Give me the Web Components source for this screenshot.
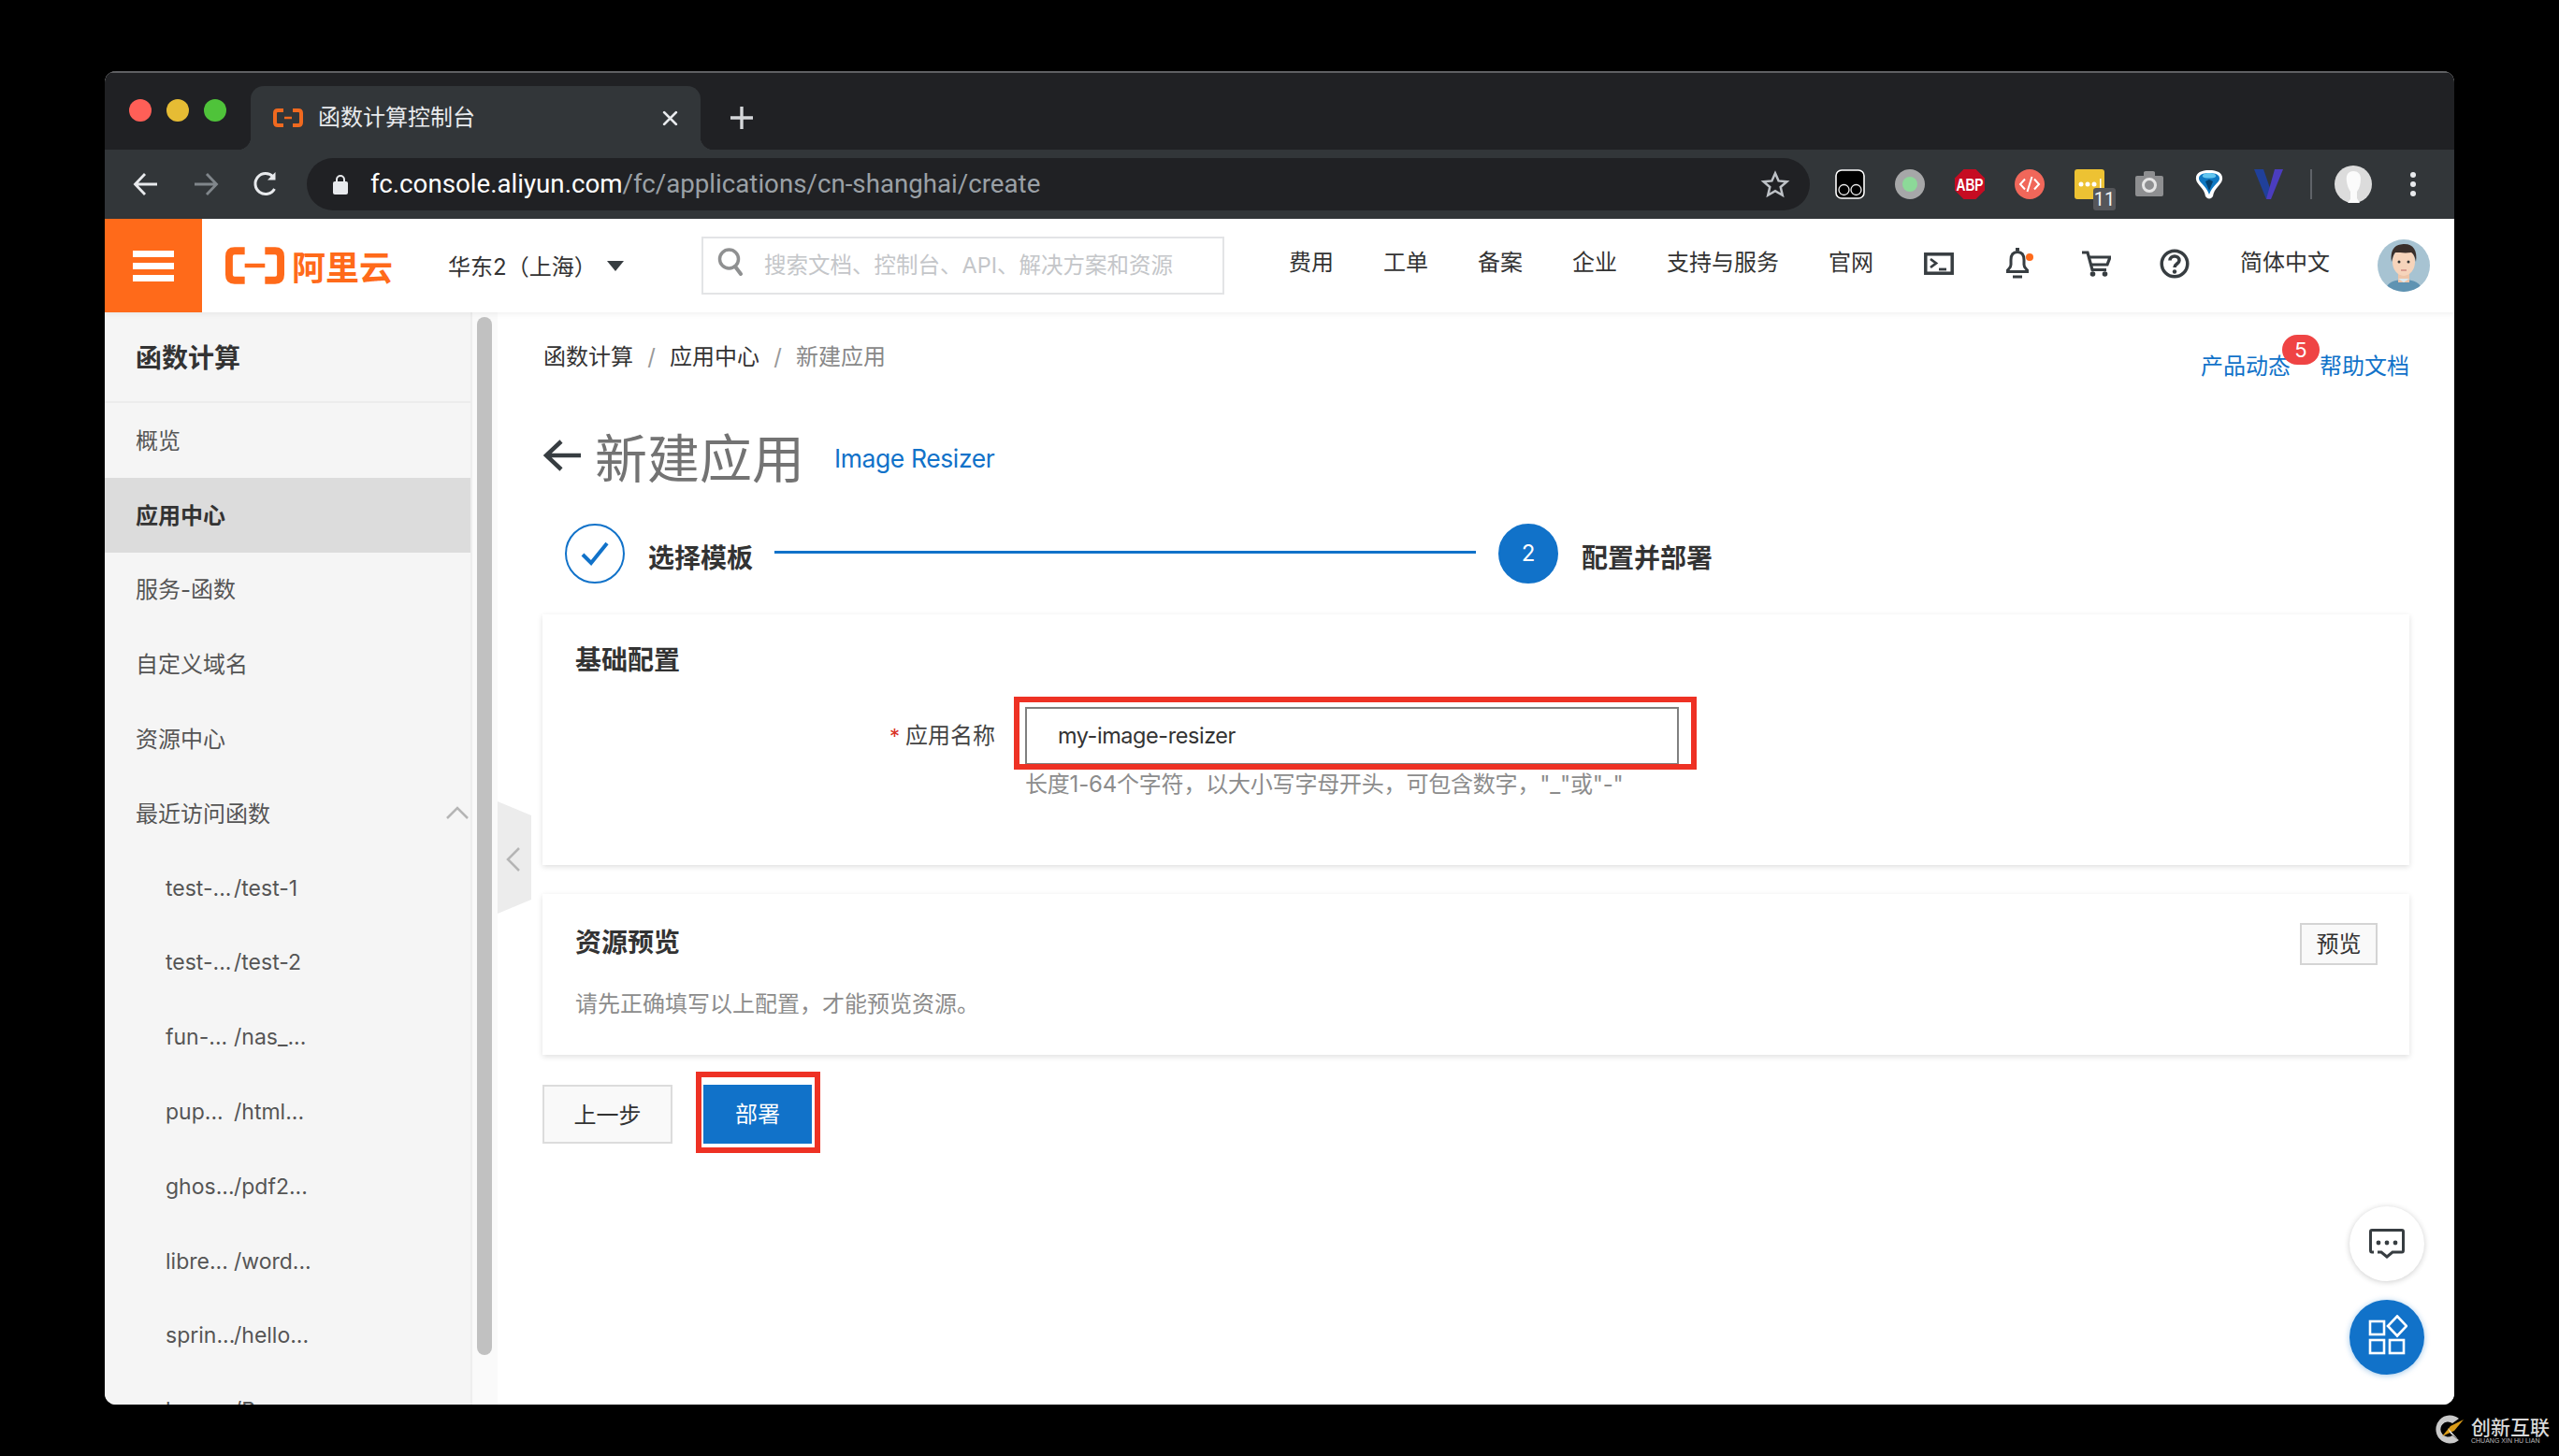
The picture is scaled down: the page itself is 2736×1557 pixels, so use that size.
<!DOCTYPE html>
<html lang="zh-CN">
<head>
<meta charset="utf-8">
<title>函数计算控制台</title>
<style>
html,body{margin:0;padding:0;background:#000;width:2736px;height:1557px;overflow:hidden}
body{font-family:Inter,"Noto Sans CJK SC",sans-serif;font-size:24px;position:relative}
</style>
</head>
<body>
<browser-window>
  <chrome-tabstrip slot="tabs">函数计算控制台</chrome-tabstrip>
  <chrome-toolbar slot="toolbar"></chrome-toolbar>
  <console-header slot="header"></console-header>
  <side-nav slot="side">
    <nav-item>概览</nav-item>
    <nav-item active>应用中心</nav-item>
    <nav-item>服务-函数</nav-item>
    <nav-item>自定义域名</nav-item>
    <nav-item>资源中心</nav-item>
    <nav-item chevron>最近访问函数</nav-item>
    <sub-item><span slot="a">test-...</span><span slot="b">/test-1</span></sub-item>
    <sub-item><span slot="a">test-...</span><span slot="b">/test-2</span></sub-item>
    <sub-item><span slot="a">fun-...</span><span slot="b">/nas_...</span></sub-item>
    <sub-item><span slot="a">pup...</span><span slot="b">/html...</span></sub-item>
    <sub-item><span slot="a">ghos...</span><span slot="b">/pdf2...</span></sub-item>
    <sub-item><span slot="a">libre...</span><span slot="b">/word...</span></sub-item>
    <sub-item><span slot="a">sprin...</span><span slot="b">/hello...</span></sub-item>
    <sub-item><span slot="a">hu-ya...</span><span slot="b">/Bas...</span></sub-item>
  </side-nav>
  <side-scroll slot="scroll"></side-scroll>
  <app-page slot="main">
    <page-top></page-top>
    <page-title>新建应用<span slot="sub">Image Resizer</span></page-title>
    <step-bar></step-bar>
    <form-card></form-card>
    <preview-card></preview-card>
    <action-bar></action-bar>
    <collapse-handle></collapse-handle>
    <fab-stack></fab-stack>
  </app-page>
</browser-window>
<water-mark></water-mark>
<script>
function def(name, html, init){
  customElements.define(name, class extends HTMLElement{
    constructor(){super();this.attachShadow({mode:'open'}).innerHTML=html;}
    connectedCallback(){ if(init) init.call(this,this.shadowRoot); }
  });
}
const BLUE='#1172c9';

def('browser-window',`<style>
:host{display:flex;flex-direction:column;position:absolute;left:112px;top:76px;width:2512px;height:1426px;border-radius:12px;overflow:hidden;background:#fff}
.body{flex:1;display:flex;min-height:0}
</style>
<slot name="tabs"></slot><slot name="toolbar"></slot><slot name="header"></slot>
<div class="body"><slot name="side"></slot><slot name="scroll"></slot><slot name="main"></slot></div>`);

def('chrome-tabstrip',`<style>
:host{display:flex;align-items:flex-end;height:84px;box-sizing:border-box;background:#202124;border-top:2px solid #5f6063;padding-left:26px;flex:none}
.lights{display:flex;gap:16px;align-self:flex-start;margin-top:28px}
.lights i{display:block;width:24px;height:24px;border-radius:50%}
.tab{position:relative;box-sizing:border-box;margin-left:26px;width:481px;height:68px;background:#323639;border-radius:14px 14px 0 0;display:flex;align-items:center;padding:0 24px 0 24px;color:#e8eaed;font:24px/34px Inter,"Noto Sans CJK SC",sans-serif}
.tab::before,.tab::after{content:"";position:absolute;bottom:0;width:14px;height:14px}
.tab::before{left:-14px;background:radial-gradient(circle at 0 0,transparent 14px,#323639 14.5px)}
.tab::after{right:-14px;background:radial-gradient(circle at 100% 0,transparent 14px,#323639 14.5px)}
.txt{margin-left:16px;flex:1}
.plus{margin:0 0 22px 32px;display:block}
</style>
<div class="lights"><i style="background:#ff5f57"></i><i style="background:#e6bc34"></i><i style="background:#4fc33a"></i></div>
<div class="tab">
  <svg width="32" height="20" viewBox="0 0 32 20" fill="none" stroke="#f0691f" stroke-width="4"><path d="M11 2H5Q2 2 2 5V15Q2 18 5 18H11"/><path d="M21 2H27Q30 2 30 5V15Q30 18 27 18H21"/><path d="M12 10H20" stroke-width="2.5"/></svg>
  <span class="txt"><slot></slot></span>
  <svg width="17" height="17" viewBox="0 0 16 16" stroke="#e8eaed" stroke-width="2.6" stroke-linecap="round"><path d="M2 2L14 14M14 2L2 14"/></svg>
</div>
<svg class="plus" width="24" height="24" viewBox="0 0 24 24" stroke="#d5d7da" stroke-width="3.4"><path d="M12 0V24M0 12H24"/></svg>`);

def('chrome-toolbar',`<style>
:host{display:flex;align-items:center;height:74px;background:#323639;padding-left:12px;flex:none;box-sizing:border-box}
.b{width:64px;height:40px;display:flex;align-items:center;justify-content:center;flex:none;position:relative}
.url{margin-left:12px;width:1607px;height:56px;background:#202124;border-radius:28px;display:flex;align-items:center;box-sizing:border-box;padding-left:28px;flex:none;font:27.7px/56px Roboto,sans-serif;color:#fff;margin-top:-1px}
.url span.p{color:#9aa0a6}
.txt{margin-left:24px;white-space:nowrap;flex:1}
.star{margin-right:21px}
.exts{margin-left:11px;display:flex}
.badge{position:absolute;left:36px;top:24px;width:24px;height:24px;background:#55565a;border-radius:3px;color:#f2f2f2;font:20px/24px Roboto,sans-serif;text-align:center}
.sep{width:2px;height:32px;background:#5f6368;margin-left:12px;flex:none}
.pf{margin-left:24px;flex:none}
.dots{margin-left:24px;width:40px;display:flex;flex-direction:column;align-items:center;gap:4px;flex:none}
.dots i{display:block;width:6px;height:6px;border-radius:50%;background:#e8eaed}
</style>
<div class="b"><svg width="28" height="28" viewBox="0 0 28 28" fill="none" stroke="#e8eaed" stroke-width="2.8"><path d="M26 14H3M13 3L2.500 14L13 25"/></svg></div>
<div class="b"><svg width="28" height="28" viewBox="0 0 28 28" fill="none" stroke="#80868b" stroke-width="2.8"><path d="M2 14H25M15 3L25.500 14L15 25"/></svg></div>
<div class="b"><svg width="30" height="30" viewBox="0 0 30 30" fill="none" stroke="#e8eaed" stroke-width="3"><path d="M24.500 20A11 11 0 1 1 23 7"/><path d="M25.500 2V10.500H17Z" fill="#e8eaed" stroke="none"/></svg></div>
<div class="url">
  <svg width="16" height="22" viewBox="0 0 16 22"><path d="M4 9V6a4 4 0 0 1 8 0V9" fill="none" stroke="#e8eaed" stroke-width="2"/><rect x="0" y="8" width="16" height="14" rx="2" fill="#e8eaed"/></svg>
  <span class="txt">fc.console.aliyun.com<span class="p">/fc/applications/cn-shanghai/create</span></span>
  <svg class="star" width="32" height="32" viewBox="0 0 24 24" fill="none" stroke="#bdc1c6" stroke-width="1.9" stroke-linejoin="miter"><path d="M12 3.200l2.700 6.100 6.600.6-5 4.400 1.500 6.500L12 17.400 6.200 20.800l1.500-6.500-5-4.400 6.600-.6z"/></svg>
</div>
<div class="exts">
  <div class="b"><svg width="32" height="32" viewBox="0 0 32 32"><rect x="1" y="1" width="30" height="30" rx="6" fill="#000" stroke="#fff" stroke-width="1.6"/><circle cx="9.500" cy="22" r="5.500" fill="none" stroke="#eee" stroke-width="1.300"/><circle cx="22.500" cy="22" r="5.500" fill="none" stroke="#eee" stroke-width="1.300"/></svg></div>
  <div class="b"><svg width="32" height="32" viewBox="0 0 32 32"><circle cx="16" cy="16" r="16" fill="#a6a7a8"/><circle cx="16" cy="16" r="8" fill="#8cd998"/></svg></div>
  <div class="b"><svg width="34" height="34" viewBox="0 0 34 34"><path d="M10.500 1H23.500L33 10.500V23.500L23.500 33H10.500L1 23.500V10.500Z" fill="#c60c22"/><text x="17" y="23.500" text-anchor="middle" font-family="Liberation Sans" font-weight="700" font-size="17.500" fill="#fff" textLength="29" lengthAdjust="spacingAndGlyphs">ABP</text></svg></div>
  <div class="b"><svg width="32" height="32" viewBox="0 0 32 32"><circle cx="16" cy="16" r="16" fill="#f1675a"/><path d="M11 10.500L6 16L11 21.500M21 10.500L26 16L21 21.500M18.500 8L13.500 24" fill="none" stroke="#fff" stroke-width="2"/></svg></div>
  <div class="b"><svg width="32" height="32" viewBox="0 0 32 32"><rect width="32" height="32" rx="3" fill="#edc233"/><g fill="#fff"><circle cx="7" cy="16" r="2.500"/><circle cx="14" cy="16" r="2.500"/><circle cx="21" cy="16" r="2.500"/><rect x="27" y="10" width="1.500" height="12"/></g></svg><span class="badge">11</span></div>
  <div class="b"><svg width="30" height="30" viewBox="0 0 30 30"><path d="M2 6H9V2.500Q9 1 11 1H19Q21 1 21 2.500V6H28Q30 6 30 8V26Q30 28 28 28H2Q0 28 0 26V8Q0 6 2 6Z" fill="#8e8f91"/><circle cx="15" cy="16" r="6.500" fill="none" stroke="#e5e5e5" stroke-width="3"/></svg></div>
  <div class="b"><svg width="32" height="32" viewBox="0 0 32 32"><path d="M16 1C7 1 1 4 2 11C3 17 11 20 12 29Q16 34 20 29C21 20 29 17 30 11C31 4 25 1 16 1Z" fill="#fff"/><path d="M16 4C9 4 4.500 6 5 10.500C6 15 13 18 16 27C19 18 26 15 27 10.500C27.500 6 23 4 16 4Z" fill="#0f78c2"/><path d="M16 4C11 4 8 6 9 8C11 10 21 10 23 8C24 6 21 4 16 4Z" fill="#62c6f0"/><path d="M16 11L12 13L16 23L20 13Z" fill="#06416f"/></svg></div>
  <div class="b"><svg width="32" height="34" viewBox="0 0 32 34"><path d="M0 1H10L18 24L13 33Z" fill="#20409a"/><path d="M22 1H31L18 33H13Z" fill="#4b3dbf"/></svg></div>
</div>
<div class="sep"></div>
<svg class="pf" width="40" height="40" viewBox="0 0 40 40"><circle cx="20" cy="20" r="20" fill="#dcdcdc"/><path d="M20 6C14 6 12 11 13 17C13.500 21 15 25 17 28V36L14 40H27L24 35V28C27 24 28 19 28 14C28 9 25 6 20 6Z" fill="#fbfbfb"/></svg>
<div class="dots"><i></i><i></i><i></i></div>`);

def('console-header',`<style>
:host{display:flex;align-items:center;height:100px;background:#fff;flex:none;position:relative;z-index:2;box-shadow:0 2px 6px rgba(0,0,0,.06);color:#333;font:24px/34px Inter,"Noto Sans CJK SC",sans-serif}
.menu{width:104px;height:100px;background:#ff6a1a;display:flex;flex-direction:column;align-items:center;justify-content:center;gap:6px;flex:none}
.menu i{display:block;width:44px;height:7px;background:#fff}
.logo{margin-left:25px;display:flex;align-items:center;flex:none;width:179px}
.logotxt{margin-left:8px;color:#ff6a1a;font:700 36px/40px "Noto Sans CJK SC",sans-serif;white-space:nowrap}
.region{margin-left:59px;flex:none;width:168px;white-space:nowrap;padding-top:3px}
.caret{width:0;height:0;border:9px solid transparent;border-top:11px solid #373d41;border-bottom:0;flex:none;margin-left:2px}
.search{margin-left:83px;width:559px;height:62px;box-sizing:border-box;border:2px solid #e3e4e6;display:flex;align-items:center;padding-left:14px;flex:none;color:#c4c6c9;white-space:nowrap;overflow:hidden;margin-top:-1px}
.search svg{margin-top:-8px}
.search span{margin-left:21px;font-size:23.500px}
.nav{margin-left:69px;display:flex;gap:53px;padding-bottom:6px;flex:none;white-space:nowrap}
.icons{display:flex;margin-left:28px;flex:none}
.icons div{width:84px;display:flex;align-items:center;justify-content:center;margin-top:-4px}
.lang{margin-left:28px;padding-bottom:6px;white-space:nowrap;flex:none}
.ava{margin-left:51px;flex:none}
</style>
<div class="menu"><i></i><i></i><i></i></div>
<div class="logo"><svg width="64" height="40" viewBox="0 0 64 40" fill="none" stroke="#ff6a1a" stroke-width="8"><path d="M21 4H10Q4 4 4 10V30Q4 36 10 36H21" stroke-linejoin="round"/><path d="M43 4H54Q60 4 60 10V30Q60 36 54 36H43"/><path d="M21 20H43" stroke-width="4.500"/></svg><span class="logotxt">阿里云</span></div>
<div class="region">华东2（上海）</div><span class="caret"></span>
<div class="search"><svg width="30" height="30" viewBox="0 0 30 30" fill="none" stroke="#8f9091" stroke-width="3.500" stroke-linecap="round"><circle cx="13.500" cy="12" r="10"/><path d="M20 20L26 28" stroke-width="4"/></svg><span>搜索文档、控制台、API、解决方案和资源</span></div>
<div class="nav"><span>费用</span><span>工单</span><span>备案</span><span>企业</span><span>支持与服务</span><span>官网</span></div>
<div class="icons">
 <div><svg width="32" height="24" viewBox="0 0 32 24" fill="none" stroke="#373d41" stroke-width="3.500"><rect x="1.800" y="1.800" width="28.400" height="20.400"/><path d="M7 7L13 11.500L7 16" stroke-width="2.800"/><path d="M16 18H24" stroke-width="2.800"/></svg></div>
 <div><svg width="48" height="34" viewBox="0 0 48 34" fill="none" stroke="#373d41" stroke-width="3"><g transform="translate(12 0)"><rect x="10" y="0" width="4" height="3.500" fill="#373d41" stroke="none"/><path d="M12 4.500C6.500 4.500 5 8.500 5 13V18C5 21 3 22 1.500 24V25.500H22.500V24C21 22 19 21 19 18V13C19 8.500 17.500 4.500 12 4.500Z"/><path d="M7 31H17"/><circle cx="25" cy="10" r="4" fill="#ff6a1a" stroke="none"/></g></svg></div>
 <div><svg width="32" height="28" viewBox="0 0 32 28" fill="none" stroke="#373d41" stroke-width="3.200"><path d="M1 2H7L12 20.500H27"/><path d="M8.500 7H31L28 15H11"/><circle cx="12.500" cy="25" r="2.800" fill="#373d41" stroke="none"/><circle cx="25.500" cy="25" r="2.800" fill="#373d41" stroke="none"/></svg></div>
 <div><svg width="32" height="32" viewBox="0 0 32 32" fill="none" stroke="#373d41" stroke-width="3.500"><circle cx="16" cy="16" r="13.800"/><path d="M11 12.500C11 6.500 21 6.500 21 12.500C21 16 16 16 16 20" stroke-width="3.600"/><circle cx="16" cy="24.500" r="2.200" fill="#373d41" stroke="none"/></svg></div>
</div>
<div class="lang">简体中文</div>
<svg class="ava" width="56" height="56" viewBox="0 0 56 56"><defs><clipPath id="c"><circle cx="28" cy="28" r="28"/></clipPath></defs><g clip-path="url(#c)"><rect width="56" height="56" fill="#a7c3d2"/><path d="M8 56C9 46 18 43 28 43C38 43 47 46 48 56Z" fill="#5f93b2"/><rect x="22" y="34" width="12" height="12" fill="#eec5a8"/><path d="M28 46L22 42H34Z" fill="#dbeaf1"/><ellipse cx="28" cy="24" rx="12" ry="15" fill="#f6d4bb"/><path d="M15 24C13 8 21 5 29 5C38 5 43 12 41 24C40 18 38 15 36 14C30 15 23 14 19 14C17 16 16 20 15 24Z" fill="#3a2f2b"/><circle cx="23" cy="24" r="1.500" fill="#333"/><circle cx="33" cy="24" r="1.500" fill="#333"/><path d="M25 33H31" stroke="#b66" stroke-width="1.200"/></g></svg>`);

def('side-nav',`<style>
:host{display:block;width:391px;background:#f5f5f5;overflow:hidden;flex:none;color:#555;font:24px/34px Inter,"Noto Sans CJK SC",sans-serif}
.t{box-sizing:border-box;border-bottom:2px solid #ececec;padding:29px 0 0 33px;font:700 28px/36px "Noto Sans CJK SC",sans-serif;color:#333;height:97px}
</style>
<div class="t">函数计算</div><slot></slot>`);

def('nav-item',`<style>
:host{display:flex;align-items:center;height:79.800px;padding:2px 0 0 33px;box-sizing:border-box;position:relative}
:host([active]){background:#dcdcdc;color:#333;font-weight:700}
svg{position:absolute;left:365px;top:32px}
</style><slot></slot>`,function(r){
  if(this.hasAttribute('chevron')&&!r.querySelector('svg')){
    r.innerHTML+='<svg width="24" height="14" viewBox="0 0 24 14" fill="none" stroke="#b5b5b5" stroke-width="2.500"><path d="M1 13L12 2L23 13"/></svg>';
  }
});

def('sub-item',`<style>
:host{display:grid;grid-template-columns:73px auto;align-items:center;height:79.800px;padding-left:65px;box-sizing:border-box;white-space:nowrap;font-size:23px}
</style><slot name="a"></slot><slot name="b"></slot>`);

def('side-scroll',`<style>
:host{display:block;width:29px;flex:none;background:#fafafa;box-sizing:border-box;border-left:2px solid #eee;padding:5px 0 0 5px}
i{display:block;width:16px;height:1110px;background:#c1c1c1;border-radius:8px}
</style><i></i>`);

def('app-page',`<style>
:host{display:block;flex:1;min-width:0;position:relative;background:#fff;box-sizing:border-box;padding:0 48px;color:#333;font:24px/34px Inter,"Noto Sans CJK SC",sans-serif}
</style><slot></slot>`);

def('page-top',`<style>
:host{display:flex;justify-content:space-between;align-items:flex-start;height:74px}
.bc{display:flex;margin:32px 0 0 1px;line-height:32px;white-space:nowrap}
.bc i{font-style:normal;color:#999;width:41px;text-align:center;margin:0 -1px}
.bc .cur{color:#888}
.links{display:flex;margin-top:41px;color:#1172c9;position:relative;gap:31px;white-space:nowrap}
.n{position:absolute;left:87px;top:-17px;width:40px;height:32px;border-radius:16px;background:#ef4444;color:#fff;font:22px/32px Inter,sans-serif;text-align:center}
</style>
<div class="bc"><span>函数计算</span><i>/</i><span>应用中心</span><i>/</i><span class="cur">新建应用</span></div>
<div class="links"><span>产品动态</span><span class="n">5</span><span>帮助文档</span></div>`);

def('page-title',`<style>
:host{display:flex;align-items:center;height:64px;margin-top:47px;color:#737373;font:56px/64px "Noto Sans CJK SC",sans-serif;white-space:nowrap}
svg{margin:0 15px 0 1px;flex:none}
.sub{margin-left:36px;color:#1172c9;font:26.500px/34px Inter,sans-serif;padding-top:5px;letter-spacing:-.4px}
</style>
<svg width="40" height="34" viewBox="0 0 40 34" fill="none" stroke="#373d41" stroke-width="4.500"><path d="M40 17H4M19 2L3 17L19 32"/></svg>
<span style="width:220px"><slot></slot></span><span class="sub"><slot name="sub"></slot></span>`);

def('step-bar',`<style>
:host{display:flex;align-items:center;height:64px;margin-top:41px;padding-left:24px;font:700 28px/38px "Noto Sans CJK SC",sans-serif;color:#333;white-space:nowrap}
.c{width:64px;height:64px;box-sizing:border-box;border-radius:50%;border:2.500px solid ${BLUE};display:flex;align-items:center;justify-content:center;flex:none}
.c.on{background:${BLUE};color:#fff;font:24px/30px Inter,sans-serif}
.l{margin-left:25px;margin-top:5px;flex:none}
.line{width:750px;height:3px;background:${BLUE};margin:-3px 24px 0 23px;flex:none}
</style>
<div class="c"><svg width="32" height="28" viewBox="0 0 32 28" fill="none" stroke="${BLUE}" stroke-width="4"><path d="M3 15L12 24L29 3"/></svg></div>
<span class="l">选择模板</span><div class="line"></div>
<div class="c on">2</div><span class="l">配置并部署</span>`);

const CARD=`:host{display:block;background:#fff;box-shadow:0 2px 6px rgba(0,0,0,.13);box-sizing:border-box;padding-left:35px}
.h{font:700 28px/40px "Noto Sans CJK SC",sans-serif;color:#333}`;

def('form-card',`<style>${CARD}
:host{height:268px;padding-top:27px;margin-top:33px}
.row{display:flex;margin-top:32px}
.lb{width:449px;height:62px;display:flex;align-items:center;justify-content:flex-end;color:#444}
.lb b{color:#d93026;font-weight:400;font-size:22px;margin-right:6px}
.in{margin-left:32px;width:699px;height:62px;box-sizing:border-box;border:2px solid #808080;padding-left:33px;line-height:58px;position:relative;color:#333;font-size:23.500px;letter-spacing:-.45px}
.in::after{content:"";position:absolute;left:-14px;top:-13px;right:-21px;bottom:-7px;border:6px solid #ee3124;pointer-events:none}
.hint{margin:4px 0 0 481px;color:#8c8c8c;white-space:nowrap;letter-spacing:-.2px}
</style>
<div class="h">基础配置</div>
<div class="row"><div class="lb"><b>*</b>应用名称</div><div class="in">my-image-resizer</div></div>
<div class="hint">长度1-64个字符，以大小写字母开头，可包含数字，"_"或"-"</div>`);

def('preview-card',`<style>${CARD}
:host{height:172px;margin-top:31px;padding:31px 34px 0 35px}
.r{display:flex;justify-content:space-between;align-items:center;height:45px}
.r .h{margin-top:-8px}
.btn{width:83px;height:45px;box-sizing:border-box;border:2px solid #d4d4d4;background:#f9f9f9;color:#333;text-align:center;line-height:41px}
.b{margin-top:25px;color:#8c8c8c;white-space:nowrap}
</style>
<div class="r"><div class="h">资源预览</div><div class="btn">预览</div></div>
<div class="b">请先正确填写以上配置，才能预览资源。</div>`);

def('action-bar',`<style>
:host{display:flex;gap:33px;margin-top:32px}
.a{width:139px;height:63px;box-sizing:border-box;border:2px solid #dcdcdc;background:#f9f9f9;text-align:center;line-height:61px;color:#333}
.d{width:116px;height:63px;background:${BLUE};color:#fff;text-align:center;line-height:64px;position:relative}
.d::after{content:"";position:absolute;left:-8px;top:-14px;right:-9px;bottom:-10px;border:6px solid #ee3124}
</style><div class="a">上一步</div><div class="d">部署</div>`);

def('collapse-handle',`<style>
:host{position:absolute;left:0;top:523px;display:block;width:36px;height:120px}
svg{display:block}
</style><svg width="36" height="120" viewBox="0 0 36 120"><path d="M0 0L36 15V105L0 120Z" fill="#ececec"/><path d="M23 50L11 62L23 74" fill="none" stroke="#b5b5b5" stroke-width="2.500"/></svg>`);

def('fab-stack',`<style>
:host{position:absolute;right:32px;top:956px;display:flex;flex-direction:column;gap:20px}
div{width:80px;height:80px;border-radius:50%;display:flex;align-items:center;justify-content:center}
.w{background:#fff;box-shadow:0 1px 6px rgba(0,0,0,.2)}
.b{background:${BLUE};box-shadow:0 1px 6px rgba(17,114,201,.4)}
</style>
<div class="w"><svg width="38" height="32" viewBox="0 0 38 32" fill="none" stroke="#373d41" stroke-width="3"><path d="M5 25H3Q1.500 25 1.500 23V3Q1.500 1.500 3 1.500H35Q36.500 1.500 36.500 3V23Q36.500 25 35 25H25L19 30L13 25H9"/><g fill="#373d41" stroke="none"><circle cx="10" cy="15" r="2.400"/><circle cx="19" cy="15" r="2.400"/><circle cx="28" cy="15" r="2.400"/></g></svg></div>
<div class="b"><svg width="44" height="48" viewBox="0 0 44 48" fill="none" stroke="#fff" stroke-width="2.600"><rect x="4" y="7" width="15" height="14"/><rect x="4" y="27" width="15" height="14"/><rect x="25" y="27" width="15" height="14"/><path d="M33 1.500L43 12L33 22.500L23 12Z"/></svg></div>`);

def('water-mark',`<style>
:host{position:absolute;left:2602px;top:1512px;display:flex;align-items:center;gap:8px}
.t{display:flex;flex-direction:column;width:86px}
.z{font:500 21px/24px "Noto Sans CJK SC",sans-serif;color:#d8d8d8;white-space:nowrap}
.e{font:7px/8px "Liberation Sans",sans-serif;color:#bcbcbc;white-space:nowrap}
</style>
<svg width="32" height="33" viewBox="0 0 32 33"><path d="M27 5A15 15 0 1 0 27 28L20 23A8 8 0 1 1 20 10Z" fill="#c9c9c9"/><path d="M32 6L18 13L9 24L22 18Z" fill="#d99b18"/><path d="M15 15L26 27L18 21Z" fill="#e6e6e6"/></svg>
<div class="t"><span class="z">创新互联</span><span class="e">CHUANG XIN HU LIAN</span></div>`);
</script>
</body>
</html>
